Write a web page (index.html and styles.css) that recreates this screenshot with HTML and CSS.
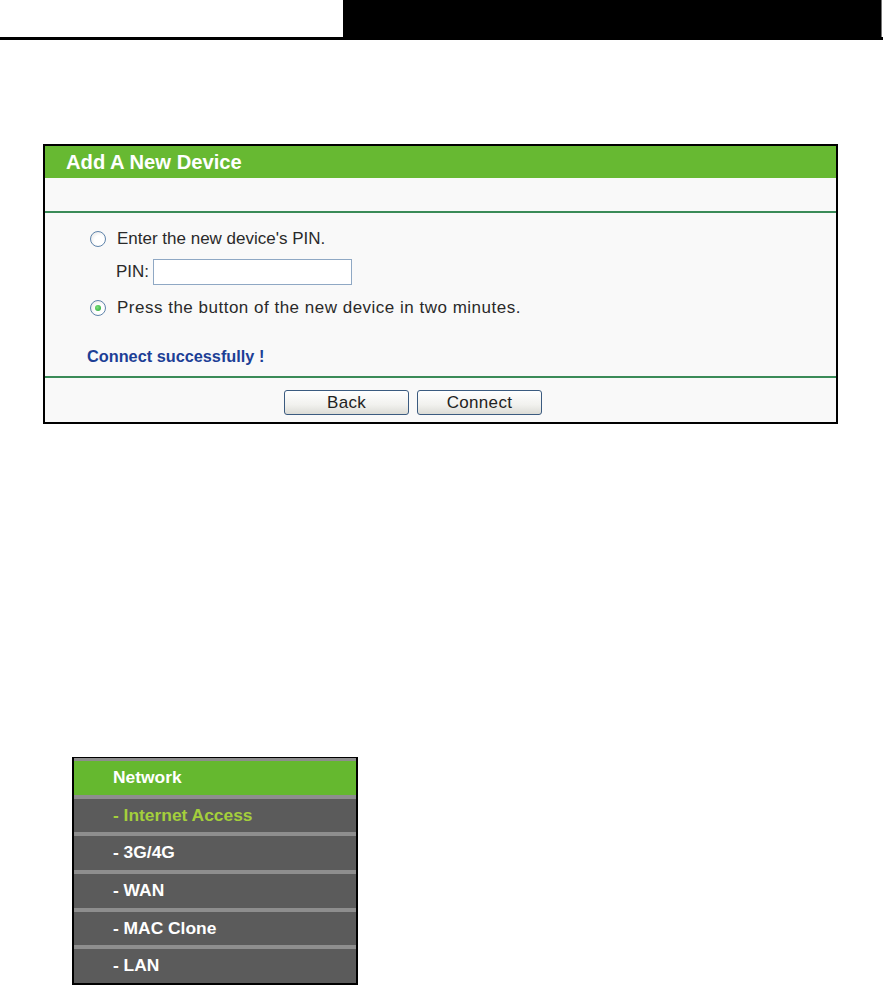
FILE: index.html
```html
<!DOCTYPE html>
<html lang="en">
<head>
<meta charset="UTF-8">
<title>Add A New Device</title>
<link rel="stylesheet" href="styles.css">
</head>
<body>

<!-- PAGE HEADER -->
<div class="topbar">
  <div class="topbar-left"></div>
  <div class="topbar-right"></div>
</div>

<!-- WPS PANEL -->
<div class="panel">
  <div class="panel-title">Add A New Device</div>
  <div class="panel-space"></div>
  <div class="panel-body">
    <label class="row">
      <input type="radio" name="mode" class="radio">
      <span>Enter the new device's PIN.</span>
    </label>
    <div class="pin-row">
      <span>PIN:</span>
      <input type="text" class="pin">
    </div>
    <label class="row row-press">
      <input type="radio" name="mode" class="radio" checked>
      <span>Press the button of the new device in two minutes.</span>
    </label>
    <div class="status">Connect successfully !</div>
  </div>
  <div class="panel-foot">
    <button class="btn">Back</button>
    <button class="btn">Connect</button>
  </div>
</div>

<!-- MENU -->
<div class="menu">
  <div class="menu-item menu-head">Network</div>
  <div class="menu-item menu-active">- Internet Access</div>
  <div class="menu-item">- 3G/4G</div>
  <div class="menu-item">- WAN</div>
  <div class="menu-item">- MAC Clone</div>
  <div class="menu-item">- LAN</div>
</div>

</body>
</html>
```

FILE: styles.css
```css
body{
 margin:0;
 background:#fff;
 font-family:"Liberation Sans",Arial,sans-serif;
 color:#2a2a2a;
}

/* HEADER */
.topbar{
 display:flex;
 height:37px;
 border-bottom:3px solid #000;
}

.topbar-left{
 width:343px;
 background:#fff;
}

.topbar-right{
 width:538px;
 background:#000;
 border-right:1px solid #777;
}

/* PANEL */
.panel{
 margin:104px 0 0 43px;
 width:791px;
 border:2px solid #000;
 background:#f9f9f9;
}

.panel-title{
 height:32px;
 line-height:32px;
 background:#67b932;
 color:#fff;
 font-weight:bold;
 font-size:20.2px;
 padding-left:21px;
}

.panel-space{
 height:33px;
 border-bottom:2px solid #3a8b58;
}

.panel-body{
 padding:15px 0 10px 45px;
 font-size:17px;
 border-bottom:2px solid #3a8b58;
}

.row{
 display:flex;
 align-items:center;
 height:22px;
 gap:11px;
}

.row-press{
 margin-top:12px;
 letter-spacing:0.5px;
}

.radio{
 appearance:none;
 -webkit-appearance:none;
 margin:0;
 width:16px;
 height:16px;
 border:1px solid #5f84ab;
 border-radius:50%;
 background:radial-gradient(circle at 60% 60%,#fff 40%,#e0e0e0 100%);
 box-sizing:border-box;
 display:grid;
 place-items:center;
}

.radio:checked::after{
 content:"";
 width:6px;
 height:6px;
 border-radius:50%;
 background:radial-gradient(circle at 40% 40%,#7ee07a,#21a437);
}

.pin-row{
 display:flex;
 align-items:center;
 gap:4px;
 margin:9px 0 0 26px;
 height:26px;
}

.pin{
 width:199px;
 height:26px;
 box-sizing:border-box;
 border:1px solid #8fa8c4;
 background:#fff;
 margin:0;
}

.status{
 margin:27px 0 0 -3px;
 height:20px;
 line-height:20px;
 font-weight:bold;
 font-size:16.3px;
 color:#1d3f96;
}

.panel-foot{
 display:flex;
 gap:8px;
 padding:12px 0 7px 239px;
}

.btn{
 width:125px;
 height:25px;
 padding:0;
 border:1px solid #3b5b80;
 border-radius:3px;
 background:linear-gradient(#ffffff,#f1f1ee 60%,#dcdcd6);
 font-family:"Liberation Sans",Arial,sans-serif;
 font-size:17px;
 letter-spacing:0.3px;
 color:#222;
}

/* MENU */
.menu{
 margin:333px 0 0 72px;
 width:282px;
 border:2px solid #000;
 border-top-width:1.5px;
 background:#5a5a5a;
}

.menu-item{
 height:33.7px;
 line-height:33px;
 border-top:4px solid #8e8e8e;
 padding-left:39px;
 color:#fff;
 font-weight:bold;
 font-size:17.4px;
 background:#5b5b5b;
}

.menu-head{
 border-top-width:3px;
 background:#65b82f;
}

.menu-active{
 color:#a4cf3c;
}
```
